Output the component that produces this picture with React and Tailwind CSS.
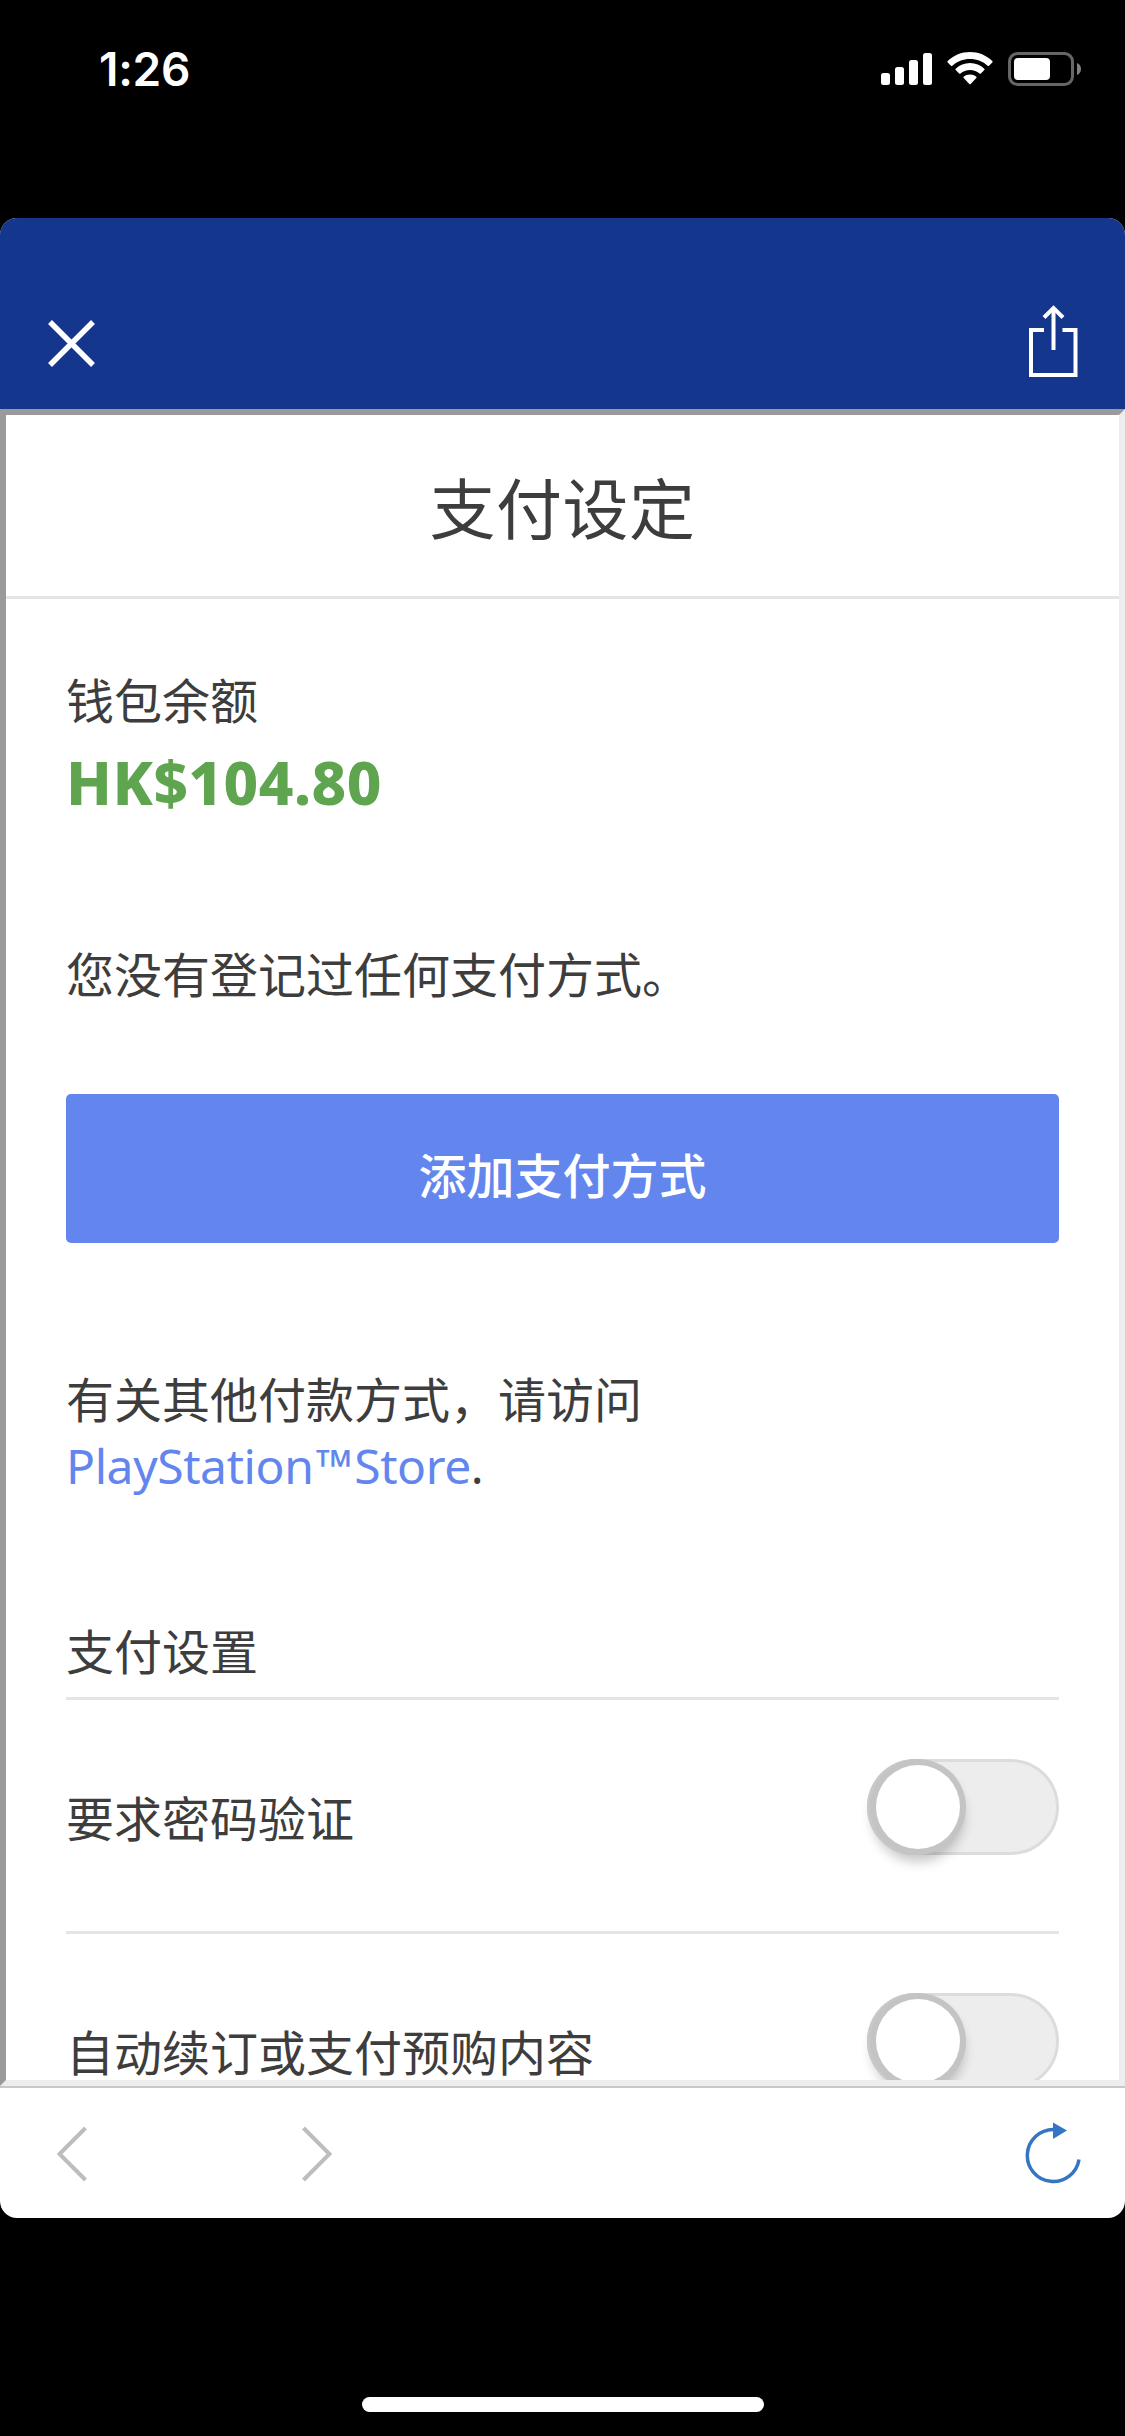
import React, { useState } from "react";

const SignalIcon = () => (
  <svg width="51" height="32" viewBox="0 0 51 32" fill="#fff">
    <rect x="0" y="20" width="9" height="12" rx="2.5" />
    <rect x="14" y="14" width="9" height="18" rx="2.5" />
    <rect x="28" y="7" width="9" height="25" rx="2.5" />
    <rect x="42" y="0" width="9" height="32" rx="2.5" />
  </svg>
);

const WifiIcon = () => (
  <svg width="46" height="33" viewBox="0 0 46 33" fill="#fff">
    <path d="M23 0C31.500 0 39.400 3.300 45.300 9.100Q46 9.800 45.300 10.500L42 13.800Q41.300 14.400 40.600 13.800C36 9.500 29.800 7.100 23 7.100S10 9.500 5.400 13.800Q4.700 14.400 4 13.800L.700 10.500Q0 9.800 .700 9.100C6.600 3.300 14.500 0 23 0Z" />
    <path d="M23 11C28.500 11 33.500 13.100 37.300 16.700Q38 17.400 37.300 18.100L33.900 21.500Q33.200 22.100 32.500 21.500C29.900 19.300 26.600 18 23 18S16.100 19.300 13.500 21.500Q12.800 22.100 12.100 21.500L8.700 18.100Q8 17.400 8.700 16.700C12.500 13.100 17.500 11 23 11Z" />
    <path d="M23 22.500C25.500 22.500 27.600 23.300 29.300 24.700Q30 25.400 29.300 26.100L23.700 31.900Q23 32.600 22.300 31.900L16.700 26.100Q16 25.400 16.700 24.700C18.400 23.300 20.500 22.500 23 22.500Z" />
  </svg>
);

const BatteryIcon = () => (
  <svg width="73" height="34" viewBox="0 0 73 34">
    <rect x="1.500" y="1.500" width="63" height="31" rx="8" fill="none" stroke="#666" strokeWidth="3" />
    <rect x="6" y="6" width="36" height="22" rx="4" fill="#fff" />
    <path d="M69 11C71.500 12 73 14.300 73 17S71.500 22 69 23Z" fill="#808080" />
  </svg>
);

const CloseIcon = () => (
  <svg width="47" height="47" viewBox="0 0 47 47" fill="none" stroke="#fff" strokeWidth="5.5">
    <path d="M2 2L45 45M45 2L2 45" />
  </svg>
);

const ShareIcon = () => (
  <svg width="50" height="74" viewBox="0 0 50 74" fill="none" stroke="#fff">
    <path strokeWidth="4" d="M16 25H3V70H47.500V25H34.500M25.500 3V45" />
    <path strokeWidth="4" d="M16 12.500L25.500 3L35 12.500" />
  </svg>
);

const ReloadIcon = () => (
  <svg width="56" height="64" viewBox="0 0 56 64">
    <path d="M28.500 8.500A26 26 0 1 0 54 38.500" fill="none" stroke="#3576c4" strokeWidth="3.500" />
    <path d="M28 1.500V18L42 9.500Z" fill="#3576c4" />
  </svg>
);

const StatusBar = () => (
  <div className="flex h-[218px] items-start justify-between pr-[44px] pl-[99px]">
    <span className="mt-[41px] font-[Inter] text-[46px] leading-[56px] font-semibold tracking-[-0.3px] text-white">
      1:26
    </span>
    <div className="mt-[52px] flex items-start">
      <div className="mt-[1px]">
        <SignalIcon />
      </div>
      <div className="ml-[15px]">
        <WifiIcon />
      </div>
      <div className="ml-[15px]">
        <BatteryIcon />
      </div>
    </div>
  </div>
);

const Toggle = ({ checked, onChange }) => (
  <button
    type="button"
    role="switch"
    aria-checked={checked}
    onClick={onChange}
    className="flex h-24 w-48 shrink-0 items-center rounded-full border-[3px] border-[#dcdcdc] bg-[#ededed] pl-[6px]"
  >
    <span className="size-[84px] rounded-full bg-white shadow-[0_0_0_6px_#c4c4c4,-3px_0_0_6px_#c8c8c8,0_9px_12px_4px_rgba(0,0,0,0.22)]"></span>
  </button>
);

const settings = [
  { id: "password", label: "要求密码验证" },
  { id: "renew", label: "自动续订或支付预购内容" },
];

const App = () => {
  const [values, setValues] = useState({ password: false, renew: false });

  const handleToggle = (id) => {
    setValues({ ...values, [id]: !values[id] });
  };

  return (
    <div className="flex h-[2436px] w-[1125px] flex-col overflow-hidden bg-black font-['Noto_Sans','Noto_Sans_CJK_SC',sans-serif]">
      <StatusBar />
      <div className="flex h-[2000px] flex-col overflow-hidden rounded-[17px] bg-white">
        <header className="flex h-[191px] shrink-0 items-start justify-between bg-[#14368c] pr-[47px] pl-[48px]">
          <button type="button" className="mt-[102px]">
            <CloseIcon />
          </button>
          <button type="button" className="mt-[87px]">
            <ShareIcon />
          </button>
        </header>

        <main className="h-[1677px] shrink-0 overflow-hidden border-[6px] border-t-[#9a9a9a] border-r-[#ededed] border-b-[#ededed] border-l-[#9a9a9a] text-[48px] leading-[66px] text-[#3d3d3d]">
          <h1 className="flex h-[184px] items-center justify-center border-b-[3px] border-[#e5e5e5] pt-[4px] text-[66px] tracking-[0.5px]">
            支付设定
          </h1>
          <div className="px-[60px]">
            <p className="mt-[69px]">钱包余额</p>
            <p className="mt-[15px] text-[60px] leading-[66px] font-extrabold tracking-[0.5px] text-[#5fa550]">
              HK$104.80
            </p>
            <p className="mt-[127px]">您没有登记过任何支付方式。</p>
            <button
              type="button"
              className="mt-[86px] flex h-[149px] w-full items-center justify-center rounded-[5px] bg-[#6386ee] pt-[14px] font-medium text-white"
            >
              添加支付方式
            </button>
            <p className="mt-[124px]">
              有关其他付款方式，请访问
              <br />
              <a href="#" className="tracking-[-0.4px] text-[#6386ee]">
                PlayStation<span className="mx-[2px]">™</span>Store
              </a>
              .
            </p>
            <h2 className="mt-[120px] h-[81px] border-b-[3px] border-[#e5e5e5]">支付设置</h2>
            {settings.map((item) => (
              <div
                key={item.id}
                className="flex h-[234px] items-start justify-between border-b-[3px] border-[#e5e5e5] pt-[59px]"
              >
                <span className="mt-[27px]">{item.label}</span>
                <Toggle checked={values[item.id]} onChange={() => handleToggle(item.id)} />
              </div>
            ))}
          </div>
        </main>

        <footer className="flex flex-1 items-start justify-between border-t-2 border-[#c8c8c8] pr-[44px] pl-[57px]">
          <div className="mt-[38px] flex gap-[215px]">
            <svg width="30" height="56" viewBox="0 0 30 56" fill="none" stroke="#bdbdbd" strokeWidth="4">
              <path d="M28.500 2L2.500 28L28.500 54" />
            </svg>
            <svg width="30" height="56" viewBox="0 0 30 56" fill="none" stroke="#bdbdbd" strokeWidth="4">
              <path d="M1.500 2L27.500 28L1.500 54" />
            </svg>
          </div>
          <button type="button" className="mt-[33px]">
            <ReloadIcon />
          </button>
        </footer>
      </div>
      <div className="mt-[179px] h-[15px] w-[402px] self-center rounded-full bg-white"></div>
    </div>
  );
};

export default App;
